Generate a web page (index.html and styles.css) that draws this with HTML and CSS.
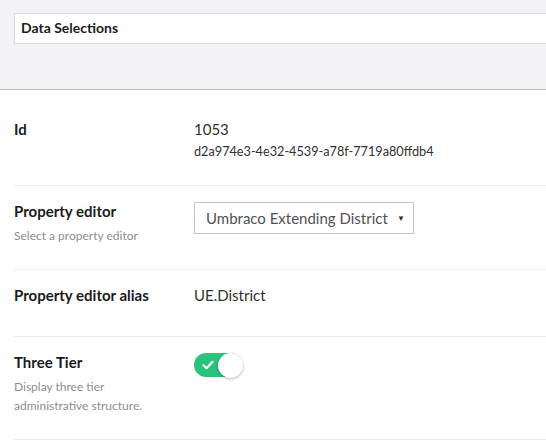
FILE: index.html
```html
<!DOCTYPE html>
<html>
<head>
<meta charset="utf-8">
<link rel="stylesheet" href="styles.css">
</head>
<body>
<div class="header">
  <div class="name-input">Data Selections</div>
</div>
<div class="panel">
  <div class="row">
    <div class="label-col"><div class="label">Id</div></div>
    <div class="value-col">
      <div class="value">1053</div>
      <div class="guid">d2a974e3-4e32-4539-a78f-7719a80ffdb4</div>
    </div>
  </div>
  <div class="row">
    <div class="label-col">
      <div class="label">Property editor</div>
      <div class="desc">Select a property editor</div>
    </div>
    <div class="value-col">
      <div class="select"><span>Umbraco Extending District</span><span class="caret">▼</span></div>
    </div>
  </div>
  <div class="row row-alias">
    <div class="label-col"><div class="label">Property editor alias</div></div>
    <div class="value-col"><div class="value">UE.District</div></div>
  </div>
  <div class="row">
    <div class="label-col">
      <div class="label">Three Tier</div>
      <div class="desc">Display three tier<br>administrative structure.</div>
    </div>
    <div class="value-col">
      <div class="toggle">
        <svg class="check" width="12" height="10" viewBox="0 0 12 10"><path d="M1.5 5.2 L4.6 8.2 L10.5 1.8" fill="none" stroke="#fff" stroke-width="2.2" stroke-linecap="round" stroke-linejoin="round"/></svg>
        <div class="knob"></div>
      </div>
    </div>
  </div>
</div>
</body>
</html>
```
FILE: styles.css
```css
html, body {
  margin: 0;
  padding: 0;
  background: #fff;
  font-family: Lato, "Open Sans", sans-serif;
  color: #1b1b1d;
  overflow: hidden;
}
.header {
  background: #f3f3f5;
  border-bottom: 1px solid #b8b8bc;
  padding: 13px 0 0 14px;
  box-sizing: border-box;
  height: 90px;
}
.name-input {
  height: 31px;
  box-sizing: border-box;
  background: #fff;
  border: 1px solid #dcdce0;
  border-right: none;
  padding: 0 0 0 6px;
  font-size: 14px;
  font-weight: 700;
  line-height: 28px;
  color: #1b1b1d;
}
.panel {
  padding: 14px 0 0 14px;
}
.row {
  display: flex;
  padding: 15px 0 24px 0;
  border-bottom: 1px solid #ececee;
}
.row-alias {
  padding-bottom: 31px;
}
.label-col {
  width: 180px;
  flex: none;
}
.label {
  font-size: 15px;
  font-weight: 700;
  line-height: 20px;
  color: #1b1b1d;
}
.desc {
  margin-top: 5px;
  font-size: 12px;
  line-height: 19px;
  color: #8d8d8f;
}
.value {
  font-size: 15px;
  line-height: 20px;
  color: #303033;
}
.guid {
  margin-top: 2px;
  font-size: 12.7px;
  line-height: 20px;
  color: #303033;
}
.select {
  margin-top: 1px;
  width: 220px;
  height: 32px;
  box-sizing: border-box;
  border: 1px solid #c4c4c8;
  display: flex;
  align-items: center;
  justify-content: space-between;
  padding: 0 8px 0 11px;
  font-size: 15px;
  color: #515156;
}
.caret {
  font-size: 8px;
  color: #303033;
}
.toggle {
  margin-top: 1px;
  position: relative;
  width: 48px;
  height: 24px;
  border-radius: 12px;
  background: #2bc37c;
}
.check {
  position: absolute;
  left: 8px;
  top: 7px;
}
.knob {
  position: absolute;
  right: -1px;
  top: 0;
  width: 25px;
  height: 25px;
  border-radius: 50%;
  background: #fff;
  box-shadow: 0 1px 3px rgba(0,0,0,0.3);
}
```
